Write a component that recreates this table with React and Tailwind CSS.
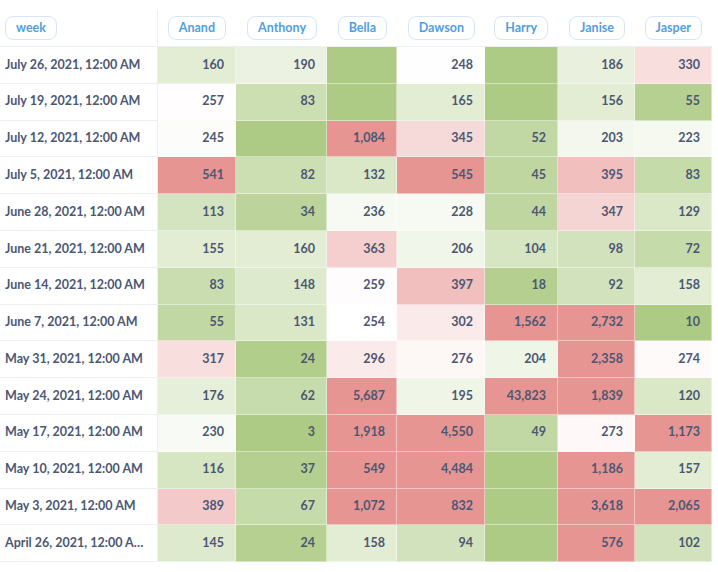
const columns = [
  { name: 'Anand', width: 'w-[78px]' },
  { name: 'Anthony', width: 'w-[91px]' },
  { name: 'Bella', width: 'w-[70px]' },
  { name: 'Dawson', width: 'w-[88px]' },
  { name: 'Harry', width: 'w-[73px]' },
  { name: 'Janise', width: 'w-[77px]' },
  { name: 'Jasper', width: 'w-[77px]' },
];

// each cell: [value, tint]  tint > 0 green, tint < 0 red, null value = empty cell
const rows = [
  ['July 26, 2021, 12:00 AM', [['160', 0.35], ['190', 0.25], [null, 1], ['248', 0.01], [null, 1], ['186', 0.27], ['330', -0.3]]],
  ['July 19, 2021, 12:00 AM', [['257', -0.02], ['83', 0.62], [null, 1], ['165', 0.35], [null, 1], ['156', 0.35], ['55', 0.9]]],
  ['July 12, 2021, 12:00 AM', [['245', 0.04], [null, 1], ['1,084', -1], ['345', -0.35], ['52', 0.75], ['203', 0.15], ['223', 0.12]]],
  ['July 5, 2021, 12:00 AM', [['541', -1], ['82', 0.62], ['132', 0.45], ['545', -1], ['45', 0.78], ['395', -0.6], ['83', 0.7]]],
  ['June 28, 2021, 12:00 AM', [['113', 0.52], ['34', 0.82], ['236', 0.1], ['228', 0.1], ['44', 0.78], ['347', -0.4], ['129', 0.45]]],
  ['June 21, 2021, 12:00 AM', [['155', 0.35], ['160', 0.35], ['363', -0.45], ['206', 0.18], ['104', 0.5], ['98', 0.55], ['72', 0.7]]],
  ['June 14, 2021, 12:00 AM', [['83', 0.65], ['148', 0.4], ['259', -0.03], ['397', -0.6], ['18', 0.92], ['92', 0.55], ['158', 0.35]]],
  ['June 7, 2021, 12:00 AM', [['55', 0.75], ['131', 0.45], ['254', 0], ['302', -0.2], ['1,562', -1], ['2,732', -1], ['10', 1]]],
  ['May 31, 2021, 12:00 AM', [['317', -0.3], ['24', 0.95], ['296', -0.2], ['276', -0.08], ['204', 0.2], ['2,358', -1], ['274', -0.05]]],
  ['May 24, 2021, 12:00 AM', [['176', 0.3], ['62', 0.68], ['5,687', -1], ['195', 0.2], ['43,823', -1], ['1,839', -1], ['120', 0.45]]],
  ['May 17, 2021, 12:00 AM', [['230', 0.08], ['3', 1], ['1,918', -1], ['4,550', -1], ['49', 0.75], ['273', -0.06], ['1,173', -1]]],
  ['May 10, 2021, 12:00 AM', [['116', 0.5], ['37', 0.92], ['549', -1], ['4,484', -1], [null, 1], ['1,186', -1], ['157', 0.35]]],
  ['May 3, 2021, 12:00 AM', [['389', -0.5], ['67', 0.7], ['1,072', -1], ['832', -1], [null, 1], ['3,618', -1], ['2,065', -1]]],
  ['April 26, 2021, 12:00 AM', [['145', 0.4], ['24', 0.9], ['158', 0.35], ['94', 0.55], [null, 1], ['576', -1], ['102', 0.55]]],
];

const GREEN = [173, 203, 133];
const RED = [230, 149, 146];

function tint(t) {
  const target = t >= 0 ? GREEN : RED;
  const k = Math.abs(t);
  const c = target.map(v => Math.round(255 + (v - 255) * k));
  return `rgb(${c[0]}, ${c[1]}, ${c[2]})`;
}

function HeaderPill({ label }) {
  return (
    <span className="inline-flex items-center h-6 px-[10px] rounded-lg border border-[#d6e6f7] text-[#509ee3] text-[12.5px] font-bold leading-none">
      {label}
    </span>
  );
}

export default function App() {
  return (
    <div className="w-[718px] h-[572px] bg-white pt-[10px] overflow-hidden" style={{ fontFamily: 'Lato, "Noto Sans", sans-serif' }}>
      <div className="w-[712px]">
        <div className="flex h-[37px] border-b border-[#edf0f3]">
          <div className="w-[158px] shrink-0 flex items-center pl-[5px] border-r border-[#edf0f3]">
            <HeaderPill label="week" />
          </div>
          {columns.map(col => (
            <div key={col.name} className={`${col.width} shrink-0 flex items-center justify-end pr-[10px]`}>
              <HeaderPill label={col.name} />
            </div>
          ))}
        </div>

        {rows.map(([week, cells]) => (
          <div key={week} className="flex h-[36.8px]">
            <div className="w-[158px] shrink-0 flex items-center pl-[5px] pr-[12px] border-r border-b border-[#edf0f3] text-[12.5px] font-bold text-[#4c5773] whitespace-nowrap overflow-hidden">
              <span className="truncate">{week}</span>
            </div>
            {cells.map(([value, t], i) => (
              <div
                key={columns[i].name}
                className={`${columns[i].width} shrink-0 flex items-center justify-end pr-[11px] border-r border-b border-[rgba(255,255,255,0.45)] text-[12.5px] font-bold text-[#4c5773]`}
                style={{ backgroundColor: tint(t) }}
              >
                {value}
              </div>
            ))}
          </div>
        ))}
      </div>
    </div>
  );
}
